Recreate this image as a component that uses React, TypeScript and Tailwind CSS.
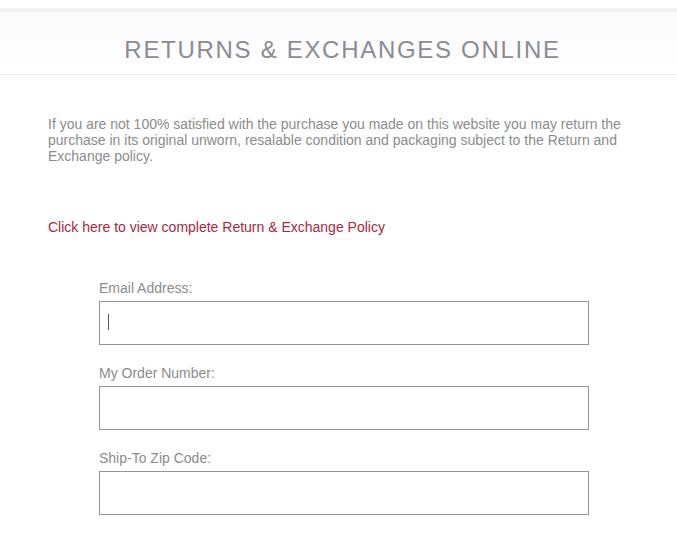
const fields = ["Email Address:", "My Order Number:", "Ship-To Zip Code:"];

export default function App() {
  return (
    <div className="min-h-[534px] bg-white font-['Liberation_Sans',Arial,sans-serif]">
      <div className="h-2 bg-white" />
      <div className="h-1 bg-[#f2f2f2]" />
      <header className="flex h-[63px] items-center justify-center border-b border-[#ececec] bg-gradient-to-b from-[#fbfbfb] to-white pl-2 pt-[13px]">
        <h1 className="text-[24px] leading-none tracking-[1.7px] text-[#8b8b93]">
          RETURNS &amp; EXCHANGES ONLINE
        </h1>
      </header>

      <main className="px-12 pt-[41px]">
        <p className="text-[14px] leading-4 text-[#8c8c8c]">
          If you are not 100% satisfied with the purchase you made on this website you may return the
          purchase in its original unworn, resalable condition and packaging subject to the Return and
          Exchange policy.
        </p>

        <a href="#" className="mt-[55px] block text-[14px] leading-4 text-[#a8283e]">
          Click here to view complete Return &amp; Exchange Policy
        </a>

        <form className="ml-[51px] mt-[45px] flex w-[490px] flex-col gap-5">
          {fields.map((label, i) => (
            <div key={label} className="flex flex-col gap-[5px]">
              <label className="text-[14px] leading-4 text-[#8c8c8c]">{label}</label>
              <div className="relative h-11 border border-[#959595] bg-white">
                {i === 0 && (
                  <span className="absolute left-2 top-3 h-[16px] w-px bg-[#555]" />
                )}
              </div>
            </div>
          ))}
        </form>
      </main>
    </div>
  );
}
